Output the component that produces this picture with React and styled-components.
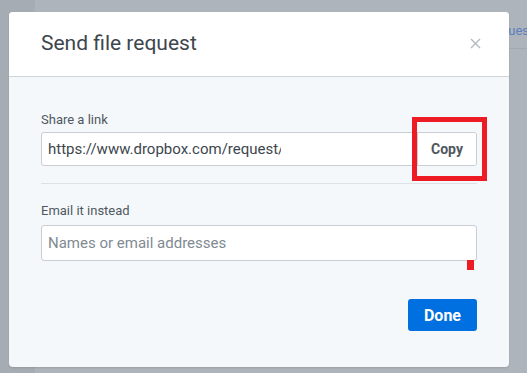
import React from 'react';
import styled, { createGlobalStyle } from 'styled-components';

const GlobalStyle = createGlobalStyle`
  * {
    margin: 0;
    padding: 0;
    box-sizing: border-box;
  }

  body {
    font-family: Roboto, 'Liberation Sans', sans-serif;
    -webkit-font-smoothing: antialiased;
    overflow: hidden;
    background: #aeb4bb;
  }
`;

// Backdrop page (dimmed by the overlay)
const Page = styled.div`
  width: 527px;
  height: 373px;
  display: flex;
  position: relative;
  overflow: hidden;
  background: #aeb4bb;
`;

const Sidebar = styled.div`
  width: 35px;
  flex-shrink: 0;
  background: #a5acb3;
`;

const Main = styled.div`
  flex: 1;
  display: flex;
  flex-direction: column;
`;

const TopBar = styled.div`
  height: 49px;
  display: flex;
  justify-content: flex-end;
  align-items: center;
  padding-top: 12px;
  margin-right: -13px;
  border-bottom: 1px solid #a3a9b0;
`;

const FaintLink = styled.span`
  font-size: 13px;
  color: #5a80bd;
  white-space: nowrap;
`;

// Modal
const Modal = styled.div`
  position: absolute;
  top: 12px;
  left: 9px;
  width: 500px;
  height: 355px;
  border-radius: 4px;
  background: #f5f8fb;
  box-shadow: 0 1px 2px rgba(0, 0, 0, 0.12);
  display: flex;
  flex-direction: column;
`;

const ModalHeader = styled.div`
  height: 65px;
  background: #fff;
  border-radius: 4px 4px 0 0;
  border-bottom: 1px solid #d0d5da;
  display: flex;
  align-items: center;
  justify-content: space-between;
  padding: 0 28px 2px 32px;
`;

const Title = styled.h2`
  font-size: 21px;
  font-weight: 400;
  color: #3d464d;
`;

const Close = styled.svg`
  width: 11px;
  height: 11px;
`;

const ModalBody = styled.div`
  flex: 1;
  display: flex;
  flex-direction: column;
  padding: 35px 32px 36px 32px;
`;

const Label = styled.label`
  display: block;
  font-size: 13px;
  line-height: 16px;
  color: #4f5860;
  margin-bottom: ${p => p.$gap}px;
`;

const Field = styled.div`
  display: flex;
  height: ${p => p.$h}px;
  background: #fff;
  border: 1px solid #c8ced4;
  border-radius: 3px;
  position: relative;
`;

const FieldText = styled.span`
  flex: 1;
  display: flex;
  align-items: center;
  padding-left: 6px;
  font-size: 15px;
  color: ${p => (p.$placeholder ? '#7f8a93' : '#3d464d')};
  white-space: nowrap;
  overflow: hidden;
`;

const Clip = styled.span`
  display: inline-block;
  width: 233px;
  overflow: hidden;
`;

const CopyButton = styled.button`
  width: 59px;
  border: none;
  border-left: 1px solid #c8ced4;
  background: #fff;
  border-radius: 0 3px 3px 0;
  font-family: inherit;
  font-size: 14px;
  font-weight: 700;
  color: #4f5860;
`;

const Divider = styled.hr`
  border: none;
  border-top: 1px solid #dde1e5;
  margin: 17px 0 19px;
`;

const Footer = styled.div`
  margin-top: auto;
  display: flex;
  justify-content: flex-end;
`;

const DoneButton = styled.button`
  width: 69px;
  height: 32px;
  border: none;
  border-radius: 3px;
  background: #0070e0;
  color: #fff;
  font-family: inherit;
  font-size: 16px;
  font-weight: 700;
`;

// Red annotation marks drawn over the screenshot
const Highlight = styled.div`
  position: absolute;
  left: 403px;
  top: 105px;
  width: 75px;
  height: 64px;
  border: 5px solid #ed1c24;
`;

const Marker = styled.div`
  position: absolute;
  right: 2px;
  bottom: -10px;
  width: 7px;
  height: 10px;
  background: #ed1c24;
`;

export default function App() {
  return (
    <>
      <GlobalStyle />
      <Page>
        <Sidebar />
        <Main>
          <TopBar>
            <FaintLink>File requests</FaintLink>
          </TopBar>
        </Main>

        <Modal>
          <ModalHeader>
            <Title>Send file request</Title>
            <Close viewBox="0 0 11 11">
              <path d="M1 1 L10 10 M10 1 L1 10" stroke="#b3b9bf" strokeWidth="1.4" />
            </Close>
          </ModalHeader>

          <ModalBody>
            <Label $gap={4}>Share a link</Label>
            <Field $h={34}>
              <FieldText>
                <Clip>https://www.dropbox.com/request/</Clip>
              </FieldText>
              <CopyButton>Copy</CopyButton>
            </Field>

            <Divider />

            <Label $gap={6}>Email it instead</Label>
            <Field $h={36}>
              <FieldText $placeholder>Names or email addresses</FieldText>
              <Marker />
            </Field>

            <Footer>
              <DoneButton>Done</DoneButton>
            </Footer>
          </ModalBody>

          <Highlight />
        </Modal>
      </Page>
    </>
  );
}
